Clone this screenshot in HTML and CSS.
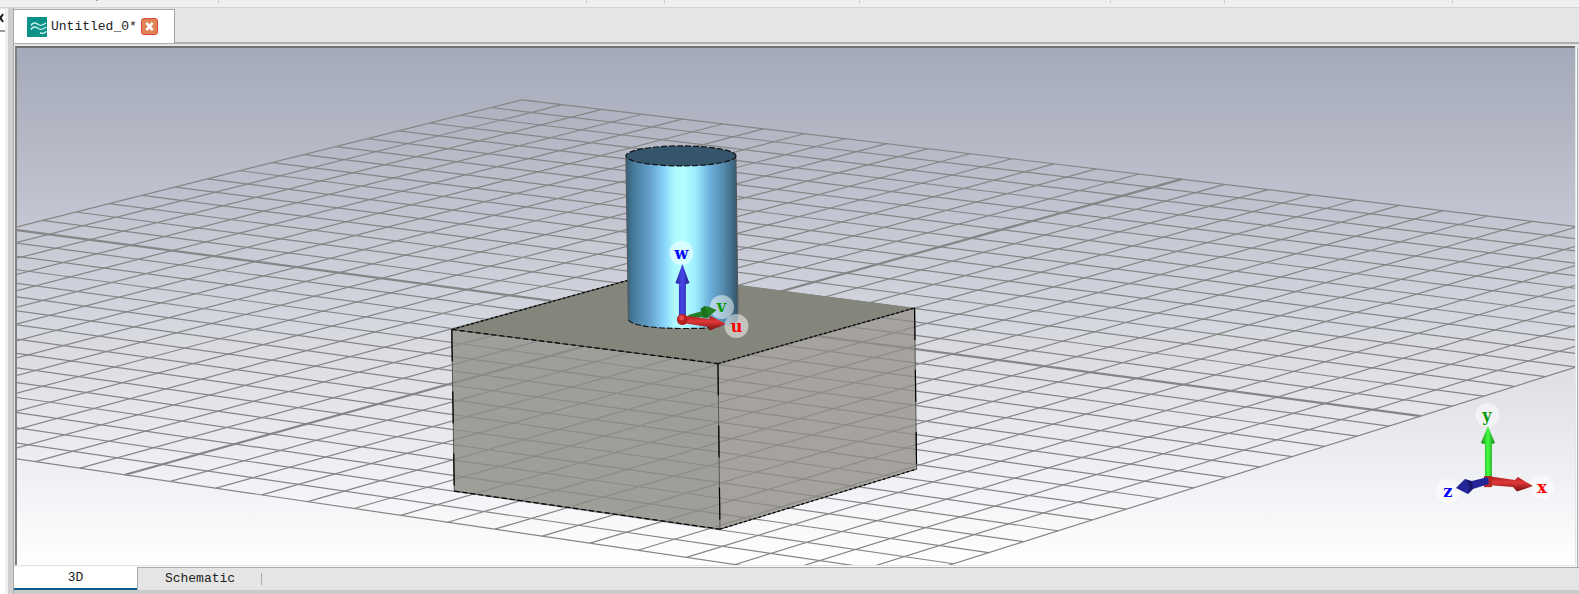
FILE: index.html
```html
<!DOCTYPE html>
<html lang="en">
<head>
<meta charset="utf-8">
<title>Untitled_0*</title>
<link rel="stylesheet" href="styles.css">
</head>
<body>
<div class="app">
  <div class="ribbon-edge">
    <svg class="ribbon-marks" viewBox="0 0 1579 8" preserveAspectRatio="none" aria-hidden="true">
      <path d="M218.5 0V4M586.5 0V4M664.5 0V4M859.5 0V4M1110.5 0V4M1224.5 0V4M1452.5 0V4"/>
      <path class="ribbon-tick" d="M96 .5H98"/>
    </svg>
  </div>
  <div class="workspace">
    <aside class="dock">
      <button class="dock-close" aria-label="Close panel">
        <svg viewBox="0 0 5 10" aria-hidden="true"><path d="M3 1L-2 9M-2 1L3 9"/></svg>
      </button>
    </aside>
    <div class="splitter"></div>
    <main class="document">
      <nav class="doc-tabs">
        <div class="doc-tab">
          <svg class="doc-icon" viewBox="0 0 20 20" aria-hidden="true">
            <rect width="20" height="20" fill="#0b9288"/>
            <path d="M4 8.500C5.500 6 8 5 10.500 7S15 9 19 6M4 12.500C5.500 10 8 9 10.500 11S15 13 19.500 10M13 15.500C15 17.500 17 16.500 19.500 14.500" fill="none" stroke="#c9efec" stroke-width="1.500"/>
          </svg>
          <span>Untitled_0*</span>
          <button class="doc-close" aria-label="Close Untitled_0">
            <svg viewBox="0 0 10 10" aria-hidden="true"><path d="M1.500 1L8.500 9M8.500 1L1.500 9"/></svg>
          </button>
        </div>
      </nav>
      <section class="viewport" aria-label="3D view">
        <svg class="scene" viewBox="17 48 1557 517" preserveAspectRatio="xMidYMid slice">
          <defs>
            <linearGradient id="body" x1="0" x2="1" y1="0" y2="0">
              <stop offset="0" stop-color="#355f7a"/>
              <stop offset=".08" stop-color="#4a7f9f"/>
              <stop offset=".22" stop-color="#65a2cd"/>
              <stop offset=".34" stop-color="#87d3fa"/>
              <stop offset=".43" stop-color="#acf8ff"/>
              <stop offset=".51" stop-color="#b4ffff"/>
              <stop offset=".62" stop-color="#9cedff"/>
              <stop offset=".75" stop-color="#6dafdc"/>
              <stop offset=".88" stop-color="#5288aa"/>
              <stop offset="1" stop-color="#345569"/>
            </linearGradient>
            <linearGradient id="blue"><stop offset="0" stop-color="#2b2b9e"/><stop offset=".5" stop-color="#4444e8"/><stop offset="1" stop-color="#25258a"/></linearGradient>
            <linearGradient id="green"><stop offset="0" stop-color="#1a851a"/><stop offset=".5" stop-color="#43ff43"/><stop offset="1" stop-color="#168016"/></linearGradient>
            <linearGradient id="red" x1="0" x2="0" y1="0" y2="1"><stop offset="0" stop-color="#a81d1d"/><stop offset=".4" stop-color="#e03838"/><stop offset="1" stop-color="#741111"/></linearGradient>
            <clipPath id="sides"><path d="M451.500 329.500L717.500 363.500L914 308L916 469L719.500 529L454 491Z"/></clipPath>
            <clipPath id="top"><path d="M451.500 329.500L651.700 273.700L914 308L717.500 363.500Z"/></clipPath>
          </defs>

          <g id="grid" class="grid"></g>

          <path fill="#9f9f9a" d="M451.500 329.500L717.500 363.500L719.500 529L454 491Z"/>
          <path fill="#a7a39e" d="M717.500 363.500L914 308L916 469L719.500 529Z"/>
          <path fill="#85867b" d="M451.500 329.500L651.700 273.700L914 308L717.500 363.500Z"/>
          <g clip-path="url(#sides)"><use href="#grid" opacity=".8"/></g>
          <g clip-path="url(#top)"><use href="#grid" opacity=".25"/></g>
          <path class="edge-base" d="M451.500 329.500L454 491L719.500 529L916 469L914 308L717.500 363.500L719.500 529M717.500 363.500L451.500 329.500L627 280.500"/>
          <path class="edge" d="M454 491L719.500 529M451.500 329.500L717.500 363.500"/>
          <path class="edge fine" d="M719.500 529L916 469M717.500 363.500L914 308M451.500 329.500L627 280.500"/>
          <path class="edge upright" d="M451.500 329.500L454 491M717.500 363.500L719.500 529M914 308L916 469"/>

          <path fill="url(#body)" d="M625.500 156L628 320C632 326 655 328.500 683 328.500C712 328.500 734 326 737.500 320L735.500 156Z"/>
          <path class="rim" d="M628 320C632 326 655 328.500 683 328.500C700 328.500 712 328 720 326"/>
          <path class="edge-base" d="M625.500 158L628 320M735.500 158L737.500 310"/>
          <ellipse cx="680.500" cy="156" rx="55" ry="10" fill="#35556b"/>
          <ellipse class="rim" cx="680.500" cy="156" rx="55" ry="10"/>

          <g>
            <circle class="halo" cx="681" cy="253" r="12"/>
            <circle class="halo" cx="721.500" cy="307" r="12"/>
            <path fill="#258025" d="M688 315L702 311L704 306L709 307L716 310L707 318L702 317L688 319Z"/>
            <path fill="#1c701c" d="M700 309L704 306L708 317L703 318Z"/>
            <path fill="url(#blue)" d="M678.500 282H685.500V318H678.500ZM675 283L682 264L689 283Q682 286 675 283Z"/>
            <path fill="url(#red)" d="M683 315.500L709 319V315.500L726 324L709 330.500L708 327L682 323Z"/>
            <circle cx="682" cy="319.500" r="5.500" fill="#b82222"/>
            <circle cx="681" cy="318" r="2.500" fill="#e64a4a"/>
            <circle class="halo" cx="736" cy="326" r="12"/>
            <text class="axis-label w" x="681" y="259">w</text>
            <text class="axis-label y" x="721" y="312">v</text>
            <text class="axis-label x" x="736" y="332">u</text>
          </g>

          <g>
            <circle class="halo" cx="1486.500" cy="415" r="12"/>
            <circle class="halo" cx="1447" cy="491" r="12"/>
            <circle class="halo" cx="1541" cy="487" r="12"/>
            <path fill="url(#green)" d="M1484 442H1491V478H1484ZM1480 443L1487 426L1494 443Q1487 446 1480 443Z"/>
            <path fill="url(#red)" d="M1486 476L1514 480L1517 477L1532 486L1516 491.500L1512 487L1486 485Z"/>
            <rect x="1483" y="476" width="8" height="11" fill="#b72525"/>
            <path fill="#25259a" d="M1487 477L1471 481L1464 479L1455 488L1467 494L1472 489L1488 484Z"/>
            <path fill="#18186a" d="M1465 479.500L1471 482L1472 489L1467 494Q1470 486 1465 479.500Z"/>
            <text class="axis-label y" x="1486" y="421">y</text>
            <text class="axis-label w" x="1447" y="497">z</text>
            <text class="axis-label x" x="1541" y="493">x</text>
          </g>
        </svg>
      </section>
      <nav class="view-tabs">
        <button class="view-tab active">3D</button>
        <button class="view-tab">Schematic</button>
      </nav>
    </main>
  </div>
</div>
<script src="grid.js"></script>
</body>
</html>
```
FILE: styles.css
```css
* { box-sizing: border-box; }
body { margin: 0; }
button { margin: 0; padding: 0; border: 0; background: none; font: inherit; color: inherit; }

.app {
  display: flex;
  flex-direction: column;
  height: 100vh;
  overflow: hidden;
  background: #e5e5e5;
  color: #222;
  font: 13px/16px "Liberation Mono", monospace;
}

.ribbon-edge { flex: none; height: 8px; background: #f0f0f0; border-bottom: 1px solid #d4d4d4; }
.ribbon-marks { display: block; width: 100%; height: 7px; }
.ribbon-marks path { stroke: #cfcfcf; fill: none; }
.ribbon-marks .ribbon-tick { stroke: #999; }

.workspace { flex: 1; display: flex; min-height: 0; }
.dock { width: 5px; padding-top: 1px; background: #fff; border-top: 1px solid #e5e5e5; }
.dock-close { display: block; width: 5px; height: 22px; border-bottom: 2px solid #999; }
.dock-close svg { display: block; width: 5px; height: 10px; margin-top: -4px; }
.dock-close path { stroke: #222; stroke-width: 2; fill: none; }
.splitter { width: 8px; background: #cfcfcf; border-left: 3px solid #f0f0f0; }

.document { flex: 1; display: flex; flex-direction: column; min-width: 0; border-left: 1px solid #aaa; }

.doc-tabs { flex: none; display: flex; height: 36px; padding-top: 1px; border-bottom: 2px solid #adadad; }
.doc-tab {
  display: flex;
  align-items: center;
  gap: 4px;
  width: 161px;
  height: 34px;
  padding-left: 13px;
  background: #fff;
  border-top: 1px solid #aaa;
  border-right: 1px solid #a5a5a5;
}
.doc-icon { width: 20px; height: 20px; }
.doc-close {
  display: grid;
  place-items: center;
  width: 17px;
  height: 17px;
  border: 1px solid #e2483e;
  border-radius: 3px;
  background: #e08355;
}
.doc-close svg { width: 9px; height: 9px; }
.doc-close path { stroke: #fff; stroke-width: 3; }

.viewport {
  flex: 1;
  min-height: 0;
  margin: 2px 4px 2px 1px;
  border-top: 2px solid #707070;
  border-left: 2px solid #808080;
  background: linear-gradient(#a5aaba, #b3b7c4 16%, #bcbfcc 26%, #c6c8d4 36%, #d4d8e0 54%, #dadbe0 57%, #e3e4e9 68%, #f3f4f7 87%, #fff);
  box-shadow: 1px 1px 0 #e5e5e5, 2px 2px 0 #fafafa, 3px 2px 0 #b0b0b0;
}
.scene { display: block; width: 100%; height: 100%; }
.grid { stroke: #858585; stroke-width: 1.2; fill: none; }
.grid .major { stroke-width: 2.2; }
.edge-base { fill: none; stroke: #555; stroke-width: 1; }
.edge { fill: none; stroke: #000; stroke-width: 1.2; stroke-dasharray: 5 3; }
.edge.fine { stroke-dasharray: 3 2; }
.edge.upright { stroke-dasharray: 32 30; }
.rim { fill: none; stroke: #111; stroke-width: 1.2; stroke-dasharray: 6 2; }
.halo { fill: #fff; fill-opacity: .5; }
.axis-label { font: bold 16px "DejaVu Serif", serif; text-anchor: middle; }
.axis-label.w { fill: #00f; }
.axis-label.x { fill: #f00; }
.axis-label.y { fill: #0a9a0a; }

.view-tabs { flex: none; display: flex; height: 27px; border-top: 1px solid #aaa; border-bottom: 4px solid #cbcbcb; }
.view-tab { width: 125px; border-left: 1px solid #aaa; position: relative; }
.view-tab.active { width: 123px; margin-top: -1px; background: #fff; border-left: 0; border-bottom: 2px solid #0e5c8a; }
.view-tab:not(.active)::after { content: ""; position: absolute; right: 0; top: 5px; height: 12px; border-right: 1px solid #aaa; }
```
FILE: grid.js
```js
const NS = "http://www.w3.org/2000/svg";
const HALF = 16;
const grid = document.getElementById("grid");

// Perspective projection of the working plane; a and b run from -1 to 1.
function project(a, b) {
  const w = 1 - 0.04343 * a - 0.05795 * b;
  return [
    (683.6 + 674.73 * a - 565.84 * b) / w,
    (318.4 + 79.5 * a + 128.75 * b) / w
  ];
}

function addLine(from, to, major) {
  const path = document.createElementNS(NS, "path");
  path.setAttribute("d", `M${from.join(" ")}L${to.join(" ")}`);
  if (major) path.setAttribute("class", "major");
  grid.appendChild(path);
}

for (let i = -HALF; i <= HALF; i++) {
  const t = i / HALF;
  addLine(project(t, -1), project(t, 1), i === 0);
  addLine(project(-1, t), project(1, t), i === 0);
}
```
